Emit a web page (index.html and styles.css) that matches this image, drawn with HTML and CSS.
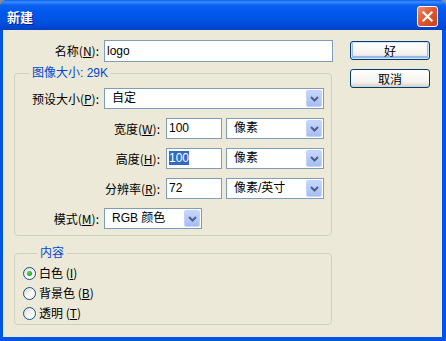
FILE: index.html
```html
<!DOCTYPE html>
<html lang="zh-CN">
<head>
    <meta charset="UTF-8" />
    <title>新建</title>
    <link rel="stylesheet" href="styles.css">
</head>
<body>
<div class="window">
    <div class="titlebar">
        <span class="title">新建</span>
        <span class="close">
            <svg width="13" height="13" viewBox="0 0 13 13"><path d="M2.5 2.5 L10.5 10.5 M10.5 2.5 L2.5 10.5" stroke="#fff" stroke-width="2.2" stroke-linecap="square"/></svg>
        </span>
    </div>
    <div class="client">
        <div class="form">
            <div class="row name-row">
                <span class="lbl w-short">名称(<u>N</u>):</span>
                <div class="field name-field">logo</div>
            </div>

            <fieldset class="group size-group">
                <legend>图像大小: 29K</legend>
                <div class="row">
                    <span class="lbl w-short">预设大小(<u>P</u>):</span>
                    <div class="combo preset">
                        <span class="combo-text">自定</span>
                        <span class="arrow"><svg width="9" height="6" viewBox="0 0 9 6"><path d="M1 1 L4.5 4.5 L8 1" fill="none" stroke="#4D6185" stroke-width="2"/></svg></span>
                    </div>
                </div>
                <div class="row">
                    <span class="lbl w-long">宽度(<u>W</u>):</span>
                    <div class="field num">100</div>
                    <div class="combo unit">
                        <span class="combo-text">像素</span>
                        <span class="arrow"><svg width="9" height="6" viewBox="0 0 9 6"><path d="M1 1 L4.5 4.5 L8 1" fill="none" stroke="#4D6185" stroke-width="2"/></svg></span>
                    </div>
                </div>
                <div class="row">
                    <span class="lbl w-long">高度(<u>H</u>):</span>
                    <div class="field num"><span class="sel">100</span></div>
                    <div class="combo unit">
                        <span class="combo-text">像素</span>
                        <span class="arrow"><svg width="9" height="6" viewBox="0 0 9 6"><path d="M1 1 L4.5 4.5 L8 1" fill="none" stroke="#4D6185" stroke-width="2"/></svg></span>
                    </div>
                </div>
                <div class="row">
                    <span class="lbl w-long">分辨率(<u>R</u>):</span>
                    <div class="field num">72</div>
                    <div class="combo unit">
                        <span class="combo-text">像素/英寸</span>
                        <span class="arrow"><svg width="9" height="6" viewBox="0 0 9 6"><path d="M1 1 L4.5 4.5 L8 1" fill="none" stroke="#4D6185" stroke-width="2"/></svg></span>
                    </div>
                </div>
                <div class="row">
                    <span class="lbl w-short">模式(<u>M</u>):</span>
                    <div class="combo mode">
                        <span class="combo-text">RGB 颜色</span>
                        <span class="arrow"><svg width="9" height="6" viewBox="0 0 9 6"><path d="M1 1 L4.5 4.5 L8 1" fill="none" stroke="#4D6185" stroke-width="2"/></svg></span>
                    </div>
                </div>
            </fieldset>

            <fieldset class="group content-group">
                <legend>内容</legend>
                <div class="radio checked"><span class="dot"></span>白色 (<u>I</u>)</div>
                <div class="radio"><span class="dot"></span>背景色 (<u>B</u>)</div>
                <div class="radio"><span class="dot"></span>透明 (<u>T</u>)</div>
            </fieldset>
        </div>

        <div class="buttons">
            <button class="btn default">好</button>
            <button class="btn">取消</button>
        </div>
    </div>
</div>
</body>
</html>
```

FILE: styles.css
```css
* {margin: 0; padding: 0; box-sizing: border-box;}
body {
    background: #8c8c8c;
    font: 12px "Liberation Sans", "Noto Sans CJK SC", sans-serif;
    color: #000;
}
u {text-decoration: underline; text-underline-offset: 1px;}

.window {
    width: 446px;
    height: 341px;
    background: #0055E5;
    border-radius: 7px 7px 0 0;
    display: flex;
    flex-direction: column;
    overflow: hidden;
}
.titlebar {
    height: 30px;
    flex: none;
    display: flex;
    align-items: center;
    padding: 3px 8px 0 7px;
    background: linear-gradient(#0A5FEA 0, #3B8DFF 2px, #0C62EE 5px, #0058EE 12px, #0054E3 20px, #0049D6 26px, #0040C5 30px);
}
.title {
    color: #fff;
    font: bold 13px "Noto Sans CJK SC", sans-serif;
    line-height: 14px;
    text-shadow: 1px 1px 0 #0A1E8C;
}
.close {
    margin-left: auto;
    width: 21px;
    height: 21px;
    border: 1px solid #fff;
    border-radius: 3px;
    background: linear-gradient(135deg, #F08A6A 0%, #E05A32 45%, #C8401E 100%);
    display: flex;
    align-items: center;
    justify-content: center;
}

.client {
    flex: 1;
    margin: 0 4px 4px 3px;
    background: #ECE9D8;
    display: flex;
    padding: 10px 0 0 11px;
}
.form {
    width: 319px;
    flex: none;
}

.row {
    display: flex;
    height: 21px;
}
.name-row {height: 22px;}
.lbl {
    flex: none;
    text-align: right;
    line-height: 21px;
    font-family: "Noto Sans CJK SC", sans-serif;
}
.name-row .lbl {width: 85px; line-height: 22px;}

.field {
    background: #fff;
    border: 1px solid #7F9DB9;
    padding-left: 2px;
    line-height: 19px;
}
.name-field {
    width: 229px;
    margin-left: 5px;
    line-height: 20px;
}

.group {
    width: 318px;
    border: 1px solid #D0D0BF;
    border-radius: 4px;
}
.group legend {
    margin-left: 14px;
    padding: 0 3px;
    color: #0046D5;
    line-height: 14px;
}
.size-group {
    margin-top: 4px;
    padding: 8px 0 6px 0;
}
.size-group .row + .row {margin-top: 9px;}
.size-group .w-short {width: 84px; margin-right: 5px;}
.size-group .w-long {width: 145px; margin-right: 6px;}
.num {width: 56px;}
.sel {
    background: #316AC5;
    color: #fff;
}

.combo {
    display: flex;
    align-items: stretch;
    background: #fff;
    border: 1px solid #7F9DB9;
    padding: 1px;
}
.combo-text {
    flex: 1;
    padding-left: 6px;
    line-height: 17px;
    white-space: nowrap;
}
.arrow {
    width: 16px;
    flex: none;
    display: flex;
    align-items: center;
    justify-content: center;
    border: 1px solid #C3D3FD;
    border-radius: 2px;
    background: linear-gradient(#C6D6FD, #B3C8F7 60%, #A6BDF3);
}
.preset {width: 220px;}
.unit {width: 98px; margin-left: 4px;}
.mode {width: 98px;}

.content-group {
    margin-top: 10px;
    padding: 3px 0 1px 8px;
}
.radio {
    display: flex;
    align-items: center;
    height: 20px;
    font-family: "Noto Sans CJK SC", sans-serif;
    line-height: 20px;
}
.dot {
    width: 13px;
    height: 13px;
    margin-right: 3px;
    border: 1px solid #1C5180;
    border-radius: 50%;
    background: linear-gradient(135deg, #DCD9CF, #F8F8F6 55%, #fff);
    display: flex;
    align-items: center;
    justify-content: center;
}
.checked .dot::after {
    content: "";
    width: 5px;
    height: 5px;
    border-radius: 50%;
    background: radial-gradient(circle at 40% 40%, #62D55F, #21A121 70%);
}

.buttons {
    margin-left: 17px;
    padding-top: 1px;
    display: flex;
    flex-direction: column;
    gap: 9px;
}
.btn {
    width: 80px;
    height: 19px;
    border: 1px solid #003C74;
    border-radius: 3px;
    background: linear-gradient(#FFFFFF, #F4F3EE 70%, #D6D0C5);
    font: 12px "Noto Sans CJK SC", sans-serif;
    line-height: 15px;
    color: #000;
}
.btn.default {
    box-shadow: inset 0 0 0 1px #CEE7FF, inset 0 -1px 0 2px #98B8EA;
}
```
